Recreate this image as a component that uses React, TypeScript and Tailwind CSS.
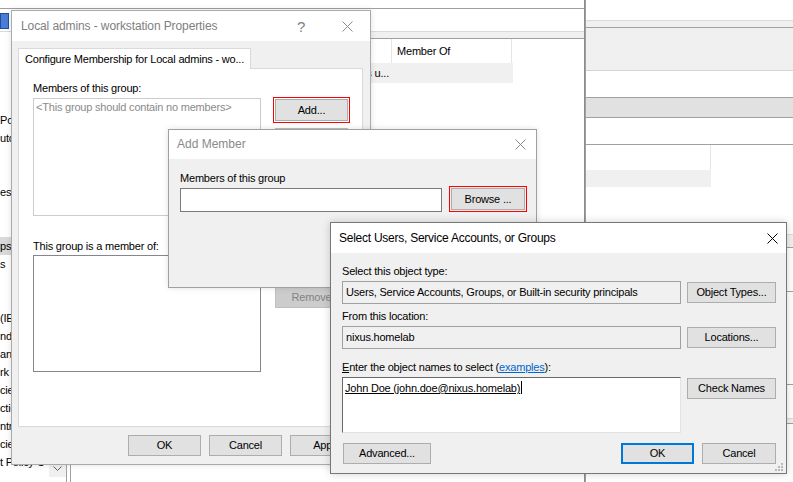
import React from "react";

// Windows 10 style dialogs stacked over a Group Policy editor

function CloseX({ color }: { color: string }) {
  return (
    <svg width="11" height="11" viewBox="0 0 11 11">
      <path d="M0.5 0.5L10.5 10.5M10.5 0.5L0.5 10.5" stroke={color} strokeWidth="1" fill="none" />
    </svg>
  );
}

function Btn({
  children,
  className = "",
  disabled = false,
}: {
  children?: React.ReactNode;
  className?: string;
  disabled?: boolean;
}) {
  return (
    <div
      className={`flex items-center justify-center border ${
        disabled ? "bg-[#cccccc] border-[#bfbfbf] text-[#838383]" : "bg-[#e1e1e1] border-[#adadad] text-black"
      } ${className}`}
    >
      {children}
    </div>
  );
}

function Highlight({ children, className = "" }: { children: React.ReactNode; className?: string }) {
  return <div className={`border border-[#ff0000] p-[1px] ${className}`}>{children}</div>;
}

const treeRows = [
  "Policies",
  "utomatic",
  "",
  "",
  "es",
  "",
  "",
  "ps",
  "s",
  "",
  "",
  "(IEEE",
  "nder",
  "anager",
  "rk",
  "cies",
  "ction",
  "ntrol",
  "cies",
  "t Policy C",
];

function Background() {
  return (
    <>
      {/* editor window behind */}
      <div className="absolute left-0 top-0 w-[585px] h-[482px] bg-white border-r border-[#8c8c8c] flex flex-col">
        <div className="h-[9px] border-b border-[#a0a0a0] shrink-0" />
        <div className="h-[23px] border-b border-[#d9d9d9] shrink-0 flex items-start">
          <div className="mt-[4px] w-[9px] h-[16px] bg-[#4a7ed6] border border-[#1f4e9c]" />
        </div>
        <div className="flex flex-1 min-h-0">
          <div className="w-[66px] flex pb-[5px]">
            <div className="w-[49px] overflow-hidden pt-[79px]">
              {treeRows.map((t, i) => (
                <div
                  key={i}
                  className={`h-[18px] leading-[18px] whitespace-nowrap ${i === 7 ? "bg-[#d9d9d9]" : ""}`}
                >
                  {t}
                </div>
              ))}
            </div>
            <div className="w-[17px] bg-[#f0f0f0] flex flex-col justify-end">
              <div className="h-[17px] flex items-center justify-center">
                <svg width="9" height="6" viewBox="0 0 9 6">
                  <path d="M0.5 0.5L4.5 4.5L8.5 0.5" stroke="#606060" fill="none" />
                </svg>
              </div>
            </div>
          </div>
          <div className="w-[5px] border-x border-[#a0a0a0] bg-white" />
          <div className="flex-1 flex flex-col">
            <div className="h-[6px] bg-[#f0f0f0] shrink-0" />
            <div className="flex-1 border-t border-[#a0a0a0]">
              <div className="flex h-[24px]">
                <div className="w-[321px] border-r border-[#e5e5e5]" />
                <div className="w-[120px] border-r border-[#e5e5e5] pl-[5px] flex items-center">Member Of</div>
              </div>
              <div className="flex h-[20px] w-[442px] bg-[#f0f0f0]">
                <div className="w-[321px] flex items-center justify-end pr-[3px] whitespace-nowrap">
                  Local admins - workstation Local admins u...
                </div>
              </div>
            </div>
          </div>
        </div>
      </div>

      {/* second window on the right */}
      <div className="absolute left-[585px] top-0 w-[208px] h-[482px] bg-white border-l border-[#a0a0a0] flex flex-col">
        <div className="h-[20px] shrink-0" />
        <div className="h-[8px] shrink-0 bg-[#f0f0f0] border-t border-b border-t-[#dadada] border-b-[#a0a0a0]" />
        <div className="h-[43px] shrink-0 bg-[#f0f0f0] border-b border-[#d5d5d5]" />
        <div className="h-[26px] shrink-0" />
        <div className="h-[21px] shrink-0 bg-[#e1e1e1] border-y border-[#a0a0a0]" />
        <div className="h-[27px] shrink-0 border-b border-[#a0a0a0]" />
        <div className="h-[25px] shrink-0 w-[125px] border-r border-[#e5e5e5]" />
        <div className="h-[17px] shrink-0 w-[125px] bg-[#f0f0f0]" />
        <div className="h-[47px] shrink-0" />
        <div className="h-[14px] shrink-0 bg-[#f0f0f0] border-t border-b border-t-[#dadada] border-b-[#a0a0a0]" />
        <div className="h-[44px] shrink-0 border-b border-[#a0a0a0]" />
        <div className="h-[93px] shrink-0 border-b border-[#a0a0a0]" />
        <div className="h-[34px] shrink-0 border-b border-[#dadada]" />
        <div className="h-[5px] shrink-0 bg-[#f0f0f0] border-b border-[#a0a0a0]" />
      </div>
    </>
  );
}

function PropertiesWindow() {
  return (
    <div className="absolute left-[11px] top-[10px] w-[360px] h-[455px] border border-[#aaaaaa] bg-[#f0f0f0] flex flex-col shadow-[0_0_6px_rgba(0,0,0,0.12)]">
      <div className="h-[30px] bg-white flex items-center shrink-0">
        <span className="pl-[9px] text-[12px] tracking-[-0.1px] text-[#808080]">Local admins - workstation Properties</span>
        <div className="ml-auto flex h-full">
          <div className="w-[46px] flex items-center justify-center text-[#808080] text-[15px]">?</div>
          <div className="w-[46px] flex items-center justify-center">
            <CloseX color="#8a8a8a" />
          </div>
        </div>
      </div>
      <div className="flex-1 flex flex-col pl-[6px] pr-[7px] pt-[7px]">
        <div className="flex">
          <div className="relative z-10 -mb-px h-[21px] w-[233px] bg-white border border-b-0 border-[#d9d9d9] pl-[6px] flex items-center whitespace-nowrap">
            Configure Membership for Local admins - wo...
          </div>
        </div>
        <div className="h-[359px] bg-white border border-[#d9d9d9] pl-[14px] pt-[12px]">
          <div className="h-[15px] leading-[15px]">Members of this group:</div>
          <div className="flex items-start">
            <div className="mt-[2px] w-[228px] h-[118px] border border-[#cccccc] pl-[2px] pt-[1px] text-[#8a8a8a]">
              &lt;This group should contain no members&gt;
            </div>
            <div className="ml-[12px] mt-[1px] flex flex-col">
              <Highlight className="w-[77px] h-[26px]">
                <Btn className="w-full h-full">Add...</Btn>
              </Highlight>
              <Btn disabled className="ml-[2px] mt-[5px] w-[73px] h-[21px]">
                Remove
              </Btn>
            </div>
          </div>
          <div className="mt-[23px] h-[15px] leading-[15px]">This group is a member of:</div>
          <div className="flex items-start">
            <div className="mt-[1px] w-[228px] h-[117px] border border-[#828790] bg-white" />
            <div className="ml-[14px] mt-[2px] flex flex-col">
              <Btn className="w-[73px] h-[21px]">Add...</Btn>
              <Btn disabled className="mt-[10px] w-[73px] h-[21px]">
                Remove
              </Btn>
            </div>
          </div>
        </div>
        <div className="flex justify-end gap-[8px] pt-[8px]">
          <Btn className="w-[73px] h-[21px]">OK</Btn>
          <Btn className="w-[73px] h-[21px]">Cancel</Btn>
          <Btn className="w-[73px] h-[21px]">Apply</Btn>
        </div>
      </div>
    </div>
  );
}

function AddMemberWindow() {
  return (
    <div className="absolute left-[168px] top-[129px] w-[369px] h-[159px] border border-[#a0a0a0] bg-[#f0f0f0] flex flex-col shadow-[0_0_6px_rgba(0,0,0,0.12)]">
      <div className="h-[29px] bg-white flex items-center shrink-0">
        <span className="pl-[8px] text-[12px] tracking-normal text-[#8a8a8a]">Add Member</span>
        <div className="ml-auto mr-[10px] flex">
          <CloseX color="#8a8a8a" />
        </div>
      </div>
      <div className="pl-[11px] pt-[12px]">
        <div className="h-[15px] leading-[15px]">Members of this group</div>
        <div className="flex items-start">
          <div className="mt-[2px] w-[262px] h-[24px] border border-[#7a7a7a] bg-white" />
          <Highlight className="ml-[7px] w-[78px] h-[26px]">
            <Btn className="w-full h-full">Browse ...</Btn>
          </Highlight>
        </div>
      </div>
    </div>
  );
}

function SelectWindow() {
  return (
    <div className="absolute left-[330px] top-[222px] w-[457px] h-[252px] border border-[#777777] bg-[#f0f0f0] flex flex-col shadow-[0_0_8px_rgba(0,0,0,0.18)]">
      <div className="h-[30px] bg-white flex items-center shrink-0">
        <span className="pl-[8px] text-[12px] tracking-[-0.25px]">Select Users, Service Accounts, or Groups</span>
        <div className="ml-auto mr-[8px] flex">
          <CloseX color="#000000" />
        </div>
      </div>
      <div className="relative flex-1 pl-[11px] pr-[10px] pt-[11px]">
        <div className="h-[15px] leading-[15px]">Select this object type:</div>
        <div className="flex items-start">
          <div className="mt-[2px] w-[339px] h-[23px] border border-[#a0a0a0] bg-[#f0f0f0] pl-[3px] flex items-center">
            Users, Service Accounts, Groups, or Built-in security principals
          </div>
          <Btn className="ml-[6px] mt-[3px] w-[89px] h-[21px]">Object Types...</Btn>
        </div>
        <div className="mt-[5px] h-[15px] leading-[15px]">From this location:</div>
        <div className="flex items-start">
          <div className="mt-[2px] w-[339px] h-[23px] border border-[#a0a0a0] bg-[#f0f0f0] pl-[3px] flex items-center">
            nixus.homelab
          </div>
          <Btn className="ml-[6px] mt-[3px] w-[89px] h-[21px]">Locations...</Btn>
        </div>
        <div className="mt-[11px] h-[15px] leading-[15px]">
          <span className="underline">E</span>nter the object names to select (
          <span className="text-[#0066cc] underline">examples</span>):
        </div>
        <div className="flex items-start">
          <div className="mt-[2px] w-[339px] h-[56px] bg-white border border-t-[#696969] border-l-[#696969] border-r-[#e3e3e3] border-b-[#e3e3e3] pl-[2px] pt-[3px]">
            <span className="underline">John Doe (john.doe@nixus.homelab)</span>
            <span className="inline-block w-px h-[13px] bg-black align-[-2px] ml-[1px]" />
          </div>
          <Btn className="ml-[6px] mt-[3px] w-[89px] h-[21px]">Check Names</Btn>
        </div>
        <div className="mt-[10px] flex items-center">
          <Btn className="ml-[1px] w-[88px] h-[21px]">Advanced...</Btn>
          <div className="flex-1" />
          <div className="w-[73px] h-[21px] border-2 border-[#0078d7] bg-[#e1e1e1] flex items-center justify-center">
            OK
          </div>
          <Btn className="ml-[8px] w-[74px] h-[21px]">Cancel</Btn>
        </div>
        <svg className="absolute right-[3px] bottom-[2px]" width="8" height="8" viewBox="0 0 8 8">
          <rect x="6" y="0" width="2" height="2" fill="#b8b8b8" />
          <rect x="3" y="3" width="2" height="2" fill="#b8b8b8" />
          <rect x="6" y="3" width="2" height="2" fill="#b8b8b8" />
          <rect x="0" y="6" width="2" height="2" fill="#b8b8b8" />
          <rect x="3" y="6" width="2" height="2" fill="#b8b8b8" />
          <rect x="6" y="6" width="2" height="2" fill="#b8b8b8" />
        </svg>
      </div>
    </div>
  );
}

export default function App() {
  return (
    <div className="relative w-[793px] h-[482px] overflow-hidden bg-white text-black font-['Liberation_Sans',Arial,sans-serif] text-[11px] leading-[15px] tracking-[-0.2px]">
      <Background />
      <PropertiesWindow />
      <AddMemberWindow />
      <SelectWindow />
    </div>
  );
}
